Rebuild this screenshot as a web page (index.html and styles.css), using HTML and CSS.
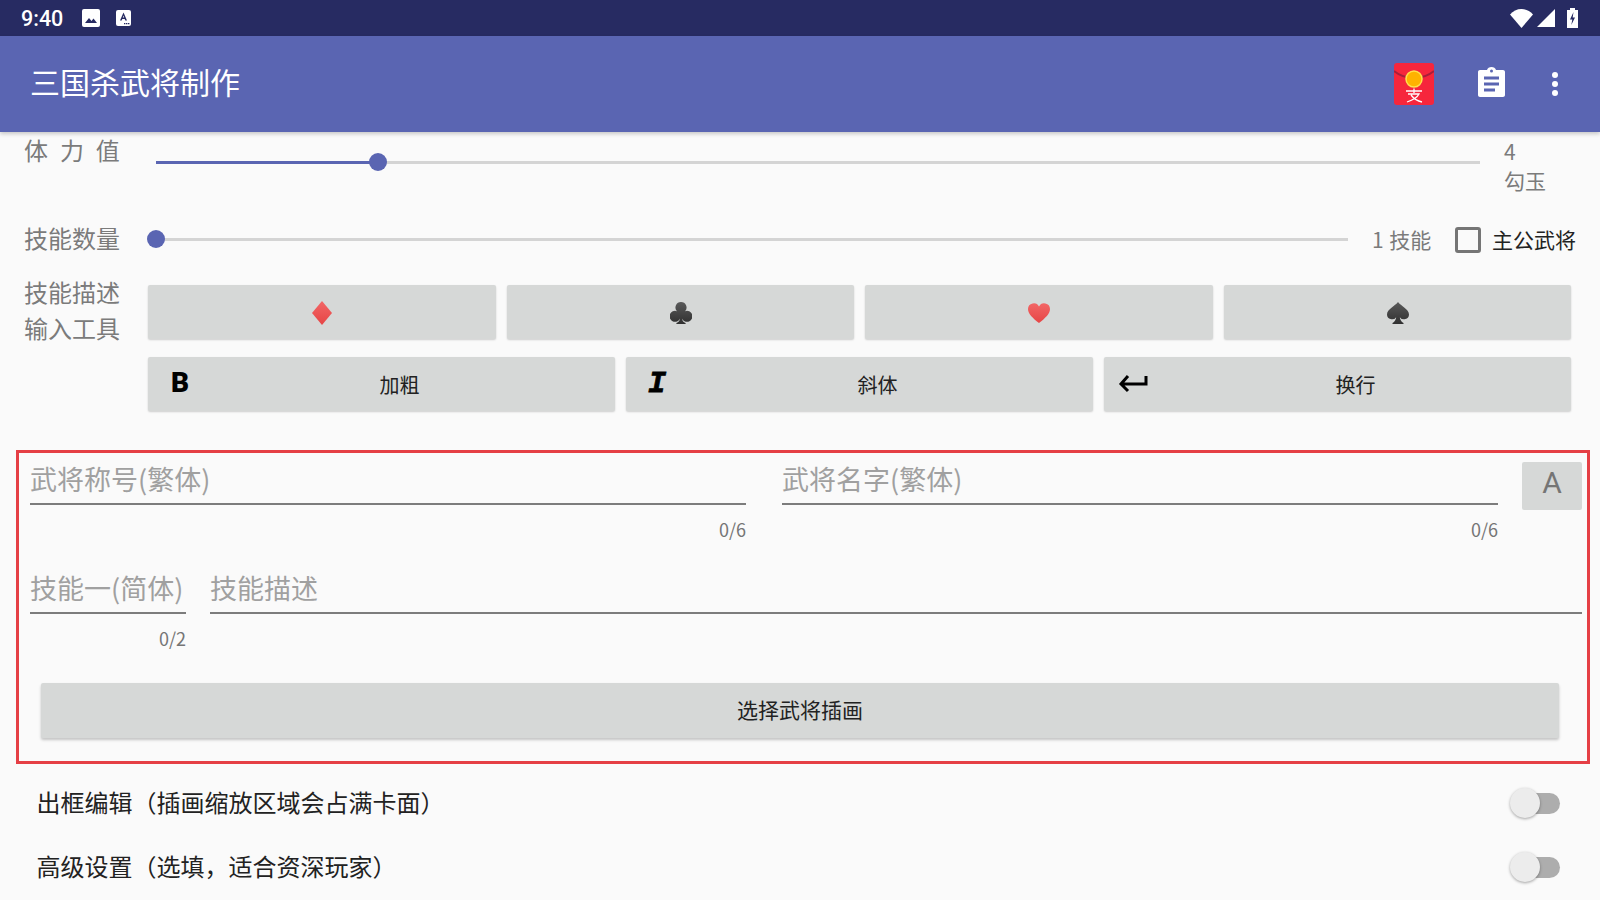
FILE: index.html
```html
<!DOCTYPE html>
<html lang="zh">
<head>
<meta charset="utf-8">
<title>三国杀武将制作</title>
<link rel="stylesheet" href="styles.css">
</head>
<body>
<div class="screen">
  <header class="status">
    <div class="status-left">
      <span class="time">9:40</span>
      <svg class="st-pic" viewBox="0 0 18 18"><rect width="18" height="18" rx="2" fill="#fff"/><path d="M3 14l4-5 2.500 3 2-2.500L15 14z" fill="#272b62"/></svg>
      <svg class="st-a" viewBox="0 0 15 16"><rect width="15" height="16" rx="2" fill="#fff"/><path d="M7.500 2.500L11 10.500H9.300L8.700 9H6.300L5.700 10.500H4zM7.500 5.500L6.800 7.600H8.200z" fill="#272b62"/><path d="M8 13h1.400v1.200H8zM10 13h1.400v1.200H10zM12 13h1.400v1.200H12z" fill="#272b62"/></svg>
    </div>
    <div class="status-right">
      <svg class="st-wifi" viewBox="0 0 23 19"><path d="M0 5.500C3 2 7 0 11.500 0S20 2 23 5.500L11.500 19z" fill="#fff"/></svg>
      <svg class="st-signal" viewBox="0 0 18 18"><path d="M18 0V18H0z" fill="#fff"/></svg>
      <svg class="st-batt" viewBox="0 0 11 20"><path d="M3 0h5v2h3v18H0V2h3z" fill="#fff"/><path d="M6.500 4L3 11.500h2.300L4.300 17 8 9.500H5.700z" fill="#272b62"/></svg>
    </div>
  </header>
  <div class="appbar">
    <h1 class="title">三国杀武将制作</h1>
    <div class="actions">
      <svg class="a-red" viewBox="0 0 40 42">
        <rect width="40" height="42" rx="3" fill="#f6263c"/>
        <path d="M0 8c6 5 12 7 20 7s14-2 20-7" fill="none" stroke="#a81f3a" stroke-width="2"/>
        <circle cx="20" cy="16" r="8" fill="#ffb300" stroke="#ffe14d" stroke-width="1.500"/>
        <path d="M12 28h16M20 25.500v4.500M14 31h11c-2 4-6 6-12 8M17 32c3 4 6 6 11 7" fill="none" stroke="#fff" stroke-width="1.300"/>
      </svg>
      <svg class="a-clip" viewBox="0 0 27 30"><path d="M2 3h7c.5-2 2.300-3 4.500-3S17.500 1 18 3h7c1.100 0 2 .9 2 2v23c0 1.100-.9 2-2 2H2c-1.100 0-2-.9-2-2V5c0-1.100.9-2 2-2z" fill="#fff"/><circle cx="13.500" cy="4" r="1.500" fill="#5a65b2"/><path d="M6 9.500h15v3H6zM6 15.500h15v3H6zM6 21.500h11v3H6z" fill="#5a65b2"/></svg>
      <svg class="a-more" viewBox="0 0 6 24"><circle cx="3" cy="3" r="3" fill="#fff"/><circle cx="3" cy="12" r="3" fill="#fff"/><circle cx="3" cy="21" r="3" fill="#fff"/></svg>
    </div>
  </div>

  <main class="content">
    <section class="row-hp">
      <span class="label label-hp">体 力 值</span>
      <div class="slider slider-hp"><i class="slider-fill"></i><i class="slider-thumb thumb-hp"></i></div>
      <div class="hp-value">4<br>勾玉</div>
    </section>

    <section class="row-skills">
      <span class="label lift">技能数量</span>
      <div class="slider slider-skill"><i class="slider-thumb thumb-skill"></i></div>
      <span class="skill-count lift-small">1 技能</span>
      <span class="checkbox"></span>
      <span class="check-label lift-small">主公武将</span>
    </section>

    <section class="row-tools">
      <div class="label tool-label">技能描述<br>输入工具</div>
      <div class="tool-grid">
        <div class="tool-line">
          <button class="btn suit"><svg viewBox="0 0 20 24"><defs><linearGradient id="r" x1="0" y1="0" x2="0" y2="1"><stop offset="0" stop-color="#f26666"/><stop offset="1" stop-color="#e64545"/></linearGradient></defs><path d="M10 0l10 12-10 12L0 12z" fill="url(#r)"/></svg></button>
          <button class="btn suit"><svg viewBox="0 0 24 24"><defs><linearGradient id="k" x1="0" y1="0" x2="0" y2="1"><stop offset="0" stop-color="#5a5a5a"/><stop offset="1" stop-color="#303030"/></linearGradient></defs><path d="M12 0a6 6 0 0 1 4.500 10A6 6 0 1 1 13 18c.3 2 1.500 4 4 5v1H7v-1c2.500-1 3.700-3 4-5a6 6 0 1 1-3.500-8A6 6 0 0 1 12 0z" fill="url(#k)"/></svg></button>
          <button class="btn suit"><svg viewBox="0 0 24 22"><path d="M12 22C5 16 0 12 0 6.500A6.300 6.300 0 0 1 12 4a6.300 6.300 0 0 1 12 2.500C24 12 19 16 12 22z" fill="url(#r)"/></svg></button>
          <button class="btn suit"><svg viewBox="0 0 24 24"><path d="M12 0c3 4 12 8 12 13.500a5.500 5.500 0 0 1-10 3c.3 2.500 1.500 5 4 6.500v1H6v-1c2.500-1.500 3.700-4 4-6.500a5.500 5.500 0 0 1-10-3C0 8 9 4 12 0z" fill="url(#k)"/></svg></button>
        </div>
        <div class="tool-line">
          <button class="btn fmt"><span class="fmt-b">B</span><span>加粗</span></button>
          <button class="btn fmt"><span class="fmt-i">I</span><span>斜体</span></button>
          <button class="btn fmt"><svg class="fmt-arrow" viewBox="0 0 28 18"><path d="M27 2v8H3M9 2L2 10l7 7" transform="translate(0 -1)" fill="none" stroke="#000" stroke-width="3"/></svg><span>换行</span></button>
        </div>
      </div>
    </section>

    <section class="redbox">
      <div class="field-line line-one">
        <div class="field field-wide"><div class="input">武将称号(繁体)</div><div class="count">0/6</div></div>
        <div class="field field-wide"><div class="input">武将名字(繁体)</div><div class="count">0/6</div></div>
        <button class="btn a-btn">A</button>
      </div>
      <div class="field-line line-two">
        <div class="field field-short"><div class="input">技能一(简体)</div><div class="count">0/2</div></div>
        <div class="field field-grow"><div class="input">技能描述</div></div>
      </div>
      <button class="btn pick">选择武将插画</button>
    </section>

    <section class="switch-row switch-first">
      <span class="switch-text">出框编辑（插画缩放区域会占满卡面）</span>
      <span class="switch"><i class="switch-thumb"></i></span>
    </section>
    <section class="switch-row">
      <span class="switch-text">高级设置（选填，适合资深玩家）</span>
      <span class="switch"><i class="switch-thumb"></i></span>
    </section>
  </main>
</div>
</body>
</html>
```
FILE: styles.css
```css
* { box-sizing: border-box; }
html, body { margin: 0; height: 100%; }
body { font-family: "Noto Sans CJK SC", "Noto Sans", sans-serif; background: #fafafa; overflow: hidden; }
.screen { width: 1600px; height: 900px; display: flex; flex-direction: column; overflow: hidden; }

.status { height: 36px; background: #272b62; display: flex; justify-content: space-between; align-items: center; padding: 0 22px 0 21px; color: #fff; flex: none; }
.status-left, .status-right { display: flex; align-items: center; }
.time { font: 500 21.500px/36px Roboto, sans-serif; width: 61px; margin-top: 1px; }
.st-pic { width: 18px; height: 18px; }
.st-a { width: 15px; height: 16px; margin-left: 16px; }
.st-wifi { width: 23px; height: 19px; }
.st-signal { width: 18px; height: 18px; margin-left: 4px; }
.st-batt { width: 11px; height: 20px; margin-left: 12px; margin-top: -1px; }

.appbar { height: 96px; background: #5a65b2; display: flex; align-items: center; justify-content: space-between; padding: 0 0 0 30px; box-shadow: 0 2px 4px rgba(0,0,0,.2); flex: none; position: relative; z-index: 1; }
.title { margin: 0 0 7px; font-size: 30px; font-weight: 400; color: #fff; line-height: 1; }
.actions { display: flex; align-items: center; }
.a-red { width: 40px; height: 42px; }
.a-clip { width: 27px; height: 30px; margin-left: 44.500px; margin-top: -4px; }
.a-more { width: 8px; height: 24px; margin-left: 46px; margin-right: 41px; }

.content { flex: 1; display: flex; flex-direction: column; }
.label { font-size: 24px; line-height: 36px; color: #7b7b7b; }

.row-hp { display: flex; height: 88px; padding-left: 24px; align-items: flex-start; }
.label-hp { width: 132px; flex: none; word-spacing: 6.500px; }
.slider { position: relative; height: 3px; background: #d4d4d4; margin-top: 29px; }
.slider-hp { width: 1324px; flex: none; }
.slider-fill { position: absolute; left: 0; top: 0; height: 3px; width: 222px; background: #5a65b2; }
.slider-thumb { position: absolute; top: -8px; width: 18px; height: 18px; border-radius: 50%; background: #5a65b2; }
.thumb-hp { left: 213px; }
.hp-value { margin-left: 24px; margin-top: 5px; font-size: 21px; line-height: 29px; color: #7b7b7b; }

.row-skills { display: flex; align-items: center; height: 40px; padding-left: 24px; }
.lift { margin-bottom: 4px; }
.lift-small { margin-bottom: 2px; }
.slider-skill { width: 1200px; margin: 0 0 2px 28px; flex: none; }
.thumb-skill { left: -1px; }
.skill-count { margin-left: 24px; width: 82.500px; font-size: 21px; color: #7b7b7b; flex: none; word-spacing: 1px; }
.checkbox { width: 26px; height: 26px; border: 3px solid #757575; border-radius: 3px; flex: none; }
.check-label { margin-left: 11.500px; font-size: 21px; color: #222; }

.row-tools { display: flex; padding-left: 24px; margin-top: 25px; }
.tool-label { width: 124px; line-height: 36px; flex: none; margin-top: -11px; }
.tool-grid { width: 1423px; display: flex; flex-direction: column; gap: 18px; }
.tool-line { display: flex; gap: 11px; }
.btn { border: 0; border-radius: 2px; background: #d6d8d7; height: 54px; flex: 1; font-family: inherit; color: #222; box-shadow: 0 1px 2px rgba(0,0,0,.18); padding: 0; display: flex; align-items: center; justify-content: center; position: relative; }
.suit { padding-left: 1px; }
.suit svg { width: 22px; height: 24px; margin-top: 1px; }
.fmt { font-size: 20px; justify-content: flex-start; padding-left: 36px; }
.fmt span:last-child { margin: 0 auto; }
.fmt-b { font: 900 28px/1 Roboto, sans-serif; color: #000; position: absolute; left: 23px; top: 12px; }
.fmt-i { font: italic 700 30px/1 "Liberation Mono", monospace; -webkit-text-stroke: .8px #000; color: #000; position: absolute; left: 22px; top: 12px; }
.fmt-arrow { width: 30px; height: 18px; position: absolute; left: 14px; top: 18px; }

.redbox { margin: 39px 10px 0 16px; height: 314px; border: 3px solid #e53f45; padding: 9px 5px 0 11px; display: flex; flex-direction: column; flex: none; }
.field-line { display: flex; }
.line-one { gap: 36px; height: 109px; }
.line-two { gap: 24px; height: 112px; }
.field { display: flex; flex-direction: column; }
.field-wide { width: 716px; }
.field-short { width: 156px; }
.field-grow { flex: 1; }
.input { height: 43px; font-size: 27px; line-height: 34px; color: #a0a0a0; border-bottom: 2px solid #7c7c7c; white-space: nowrap; }
.count { font-size: 18px; line-height: 24px; color: #757575; text-align: right; margin-top: 12px; }
.a-btn { flex: none; width: 60px; height: 48px; margin-left: -12px; padding-bottom: 6px; font: 400 30px/1 Roboto, sans-serif; color: #757575; box-shadow: none; }
.pick { flex: none; height: 55px; width: 1518px; margin-left: 11px; padding-bottom: 4px; font-size: 21px; box-shadow: 0 2px 3px rgba(0,0,0,.22); }

.switch-row { display: flex; align-items: center; justify-content: space-between; height: 64px; padding: 0 40px 0 36.500px; font-size: 24px; color: #222; flex: none; }
.switch-first { margin-top: 7px; }
.switch-text { margin-bottom: 3px; }
.switch { width: 49px; height: 21px; background: #adadad; border-radius: 11px; position: relative; display: block; }
.switch-thumb { position: absolute; left: -1px; top: -5px; width: 30px; height: 30px; border-radius: 50%; background: #ececec; box-shadow: 0 1px 3px rgba(0,0,0,.35); }
```
